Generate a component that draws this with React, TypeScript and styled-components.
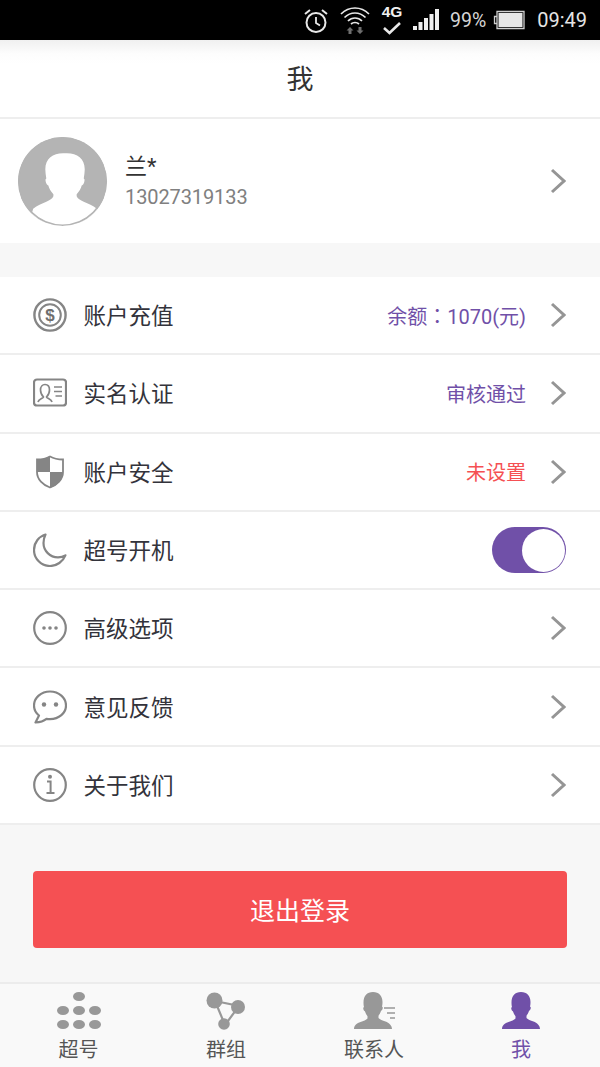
import styled, { createGlobalStyle } from 'styled-components';
import type { ReactNode } from 'react';

const GlobalStyle = createGlobalStyle`
  html, body {
    margin: 0;
    padding: 0;
    background: #f7f7f7;
  }
  * {
    box-sizing: border-box;
  }
`;

const Colon = styled.span`
  font-family: "Noto Sans CJK TC", sans-serif;
`;

const personPath =
  'M19 0c-6 0-9.500 4-9.500 10.500 0 2 .2 3.500.5 4.500-.8.300-.9 1.200-.6 2.300.3 1 .8 1.700 1.500 1.900.6 2 1.500 3.700 2.600 5v2.300c-1.300 1.500-4 2.500-7 3.500C3 30.800 0 33.500 0 37h38c0-3.500-3-6.200-6.500-7.500-3-1-5.700-2-7-3.500v-2.300c1.100-1.300 2-3 2.600-5 .7-.2 1.200-.9 1.500-1.900.3-1.100.2-2-.6-2.300.3-1 .5-2.500.5-4.500C28.500 4 25 0 19 0z';

const Chevron = () => (
  <ChevronSvg viewBox="0 0 16 26">
    <path d="M2 2l12 11L2 24" fill="none" stroke="#959595" strokeWidth="3" />
  </ChevronSvg>
);

const CoinIcon = () => (
  <RowSvg viewBox="0 0 34 34">
    <circle cx="17" cy="17" r="15.600" fill="none" stroke="#858585" strokeWidth="2.400" />
    <circle cx="17" cy="17" r="10.800" fill="none" stroke="#858585" strokeWidth="2" />
    <text x="17" y="23" textAnchor="middle" fontSize="17" fontWeight="700" fontFamily="Liberation Sans, sans-serif" fill="#6e6e6e">$</text>
  </RowSvg>
);

const IdIcon = () => (
  <RowSvg viewBox="0 0 34 34">
    <rect x="1" y="3.500" width="32" height="26" rx="3" fill="none" stroke="#858585" strokeWidth="2.200" />
    <path d="M5 26c.5-3 5-3.500 5.500-5-2-2-3-4-3-7 0-3.500 2-5.500 4.500-5.500s4.500 2 4.500 5.500c0 3-1 5-3 7 .5 1.500 5 2 5.500 5" fill="none" stroke="#858585" strokeWidth="1.700" />
    <path d="M21 11h8M21 15.500h8M22.500 20h6.500" stroke="#858585" strokeWidth="1.700" />
  </RowSvg>
);

const ShieldIcon = () => (
  <RowSvg viewBox="0 0 34 34">
    <path d="M17 1.500c4 2.300 8 3 13 3V17c0 7.500-6 13-13 15.500C10 30 4 24.500 4 17V4.500c5 0 9-.7 13-3z" fill="#fff" stroke="#858585" strokeWidth="1.800" />
    <path d="M17 1v16H4V4.500C9 4.500 13 3.500 17 1zM17 17h13c0 8-6 13.500-13 16V17z" fill="#858585" />
  </RowSvg>
);

const MoonIcon = () => (
  <RowSvg viewBox="0 0 34 34">
    <path d="M12.500 1.500C5.800 3.600 1 9.600 1 17c0 8.800 7.200 16 16 16 6.900 0 12.900-4.400 15.400-10.700-2 1.300-4.800 2-7.400 2-8 0-14.500-6.400-14.500-14.300 0-3.200.7-5.900 2-8.500z" fill="none" stroke="#858585" strokeWidth="2.200" strokeLinejoin="round" />
  </RowSvg>
);

const MoreIcon = () => (
  <RowSvg viewBox="0 0 34 34">
    <circle cx="17" cy="17" r="15.800" fill="none" stroke="#858585" strokeWidth="2.200" />
    <circle cx="11" cy="17" r="1.800" fill="#858585" />
    <circle cx="17" cy="17" r="1.800" fill="#858585" />
    <circle cx="23" cy="17" r="1.800" fill="#858585" />
  </RowSvg>
);

const ChatIcon = () => (
  <RowSvg viewBox="0 0 34 34">
    <path d="M17 1.500C8 1.500 1 7.800 1 15.500c0 4 1.900 7.500 5 10L2.500 32.500c4.500-.3 8.500-1.700 11-3.700 1.100.2 2.300.3 3.500.3 9 0 16-6 16-13.600S26 1.500 17 1.500z" fill="none" stroke="#858585" strokeWidth="2.200" strokeLinejoin="round" />
    <circle cx="11" cy="14.500" r="2.200" fill="#858585" />
    <circle cx="23" cy="14.500" r="2.200" fill="#858585" />
  </RowSvg>
);

const InfoIcon = () => (
  <RowSvg viewBox="0 0 34 34">
    <circle cx="17" cy="17" r="15.800" fill="none" stroke="#858585" strokeWidth="2.200" />
    <circle cx="17" cy="8.800" r="2" fill="#858585" />
    <path d="M14 13.500h3.600v11.500M13.500 25h8" fill="none" stroke="#858585" strokeWidth="2" />
  </RowSvg>
);

const DotsIcon = ({ color }: { color: string }) => (
  <TabSvg viewBox="0 0 44 38" $w={44} $h={38}>
    <g fill={color}>
      <ellipse cx="22" cy="4.500" rx="6" ry="4.500" />
      <ellipse cx="6" cy="18.500" rx="6" ry="4.500" />
      <ellipse cx="22" cy="18.500" rx="6" ry="4.500" />
      <ellipse cx="38" cy="18.500" rx="6" ry="4.500" />
      <ellipse cx="6" cy="32.500" rx="6" ry="4.500" />
      <ellipse cx="22" cy="32.500" rx="6" ry="4.500" />
      <ellipse cx="38" cy="32.500" rx="6" ry="4.500" />
    </g>
  </TabSvg>
);

const GroupIcon = ({ color }: { color: string }) => (
  <TabSvg viewBox="0 0 40 38" $w={40} $h={38}>
    <path d="M9 9l24 5-14 19z" fill="none" stroke={color} strokeWidth="2.200" />
    <circle cx="8.500" cy="8.500" r="8" fill={color} />
    <circle cx="32" cy="15" r="7" fill={color} />
    <circle cx="18" cy="32" r="5.800" fill={color} />
  </TabSvg>
);

const ContactIcon = ({ color }: { color: string }) => (
  <TabSvg viewBox="0 0 41 38" $w={41} $h={38}>
    <path d={personPath} fill={color} />
    <path d="M30 16h11M33 21h8M36 26h5" stroke={color} strokeWidth="1.400" />
  </TabSvg>
);

const PersonIcon = ({ color }: { color: string }) => (
  <TabSvg viewBox="0 0 38 38" $w={38} $h={38}>
    <path d={personPath} fill={color} />
  </TabSvg>
);

interface MenuItem {
  icon: ReactNode;
  label: string;
  value?: ReactNode;
  valueColor?: string;
  toggle?: boolean;
}

const PURPLE = '#7050a8';

const items: MenuItem[] = [
  {
    icon: <CoinIcon />,
    label: '账户充值',
    value: (
      <>
        余额<Colon>：</Colon>1070(元)
      </>
    ),
    valueColor: PURPLE,
  },
  { icon: <IdIcon />, label: '实名认证', value: '审核通过', valueColor: PURPLE },
  { icon: <ShieldIcon />, label: '账户安全', value: '未设置', valueColor: '#f55053' },
  { icon: <MoonIcon />, label: '超号开机', toggle: true },
  { icon: <MoreIcon />, label: '高级选项' },
  { icon: <ChatIcon />, label: '意见反馈' },
  { icon: <InfoIcon />, label: '关于我们' },
];

const tabs = [
  { label: '超号', Icon: DotsIcon },
  { label: '群组', Icon: GroupIcon },
  { label: '联系人', Icon: ContactIcon },
  { label: '我', Icon: PersonIcon, active: true },
];

export default function App() {
  return (
    <Page>
      <GlobalStyle />
      <StatusBar>
        <AlarmSvg viewBox="0 0 26 26" $w={26} $h={26}>
          <circle cx="13" cy="14.500" r="9.500" fill="none" stroke="#e8e8e8" strokeWidth="2" />
          <path d="M13 9v6l4 2.500" fill="none" stroke="#e8e8e8" strokeWidth="1.800" />
          <path d="M2 6l5-4M24 6l-5-4" stroke="#e8e8e8" strokeWidth="2" />
        </AlarmSvg>
        <StatusSvg viewBox="0 0 30 30" $w={30} $h={30}>
          <g fill="none" stroke="#e8e8e8" strokeWidth="1.700">
            <path d="M1 9c8-8 20-8 28 0" />
            <path d="M4.500 12.500c6-6 15-6 21 0" />
            <path d="M8 16c4-4 10-4 14 0" />
            <path d="M11 19c2.200-2 5.800-2 8 0" />
          </g>
          <path d="M10 22l-3.500 3.500h2V29h3v-3.500h2zM20 29l3.500-3.500h-2V22h-3v3.500h-2z" fill="#6e6e6e" />
        </StatusSvg>
        <FourG>
          <FourGText>4G</FourGText>
          <StatusSvg viewBox="0 0 20 14" $w={20} $h={14}>
            <path d="M2 7l5.500 5L18 2" fill="none" stroke="#e8e8e8" strokeWidth="2.600" />
          </StatusSvg>
        </FourG>
        <StatusSvg viewBox="0 0 26 22" $w={26} $h={22}>
          <path d="M0 17h4v4H0zM5.500 13h4v8h-4zM11 9h4v12h-4zM16.500 5h4v16h-4zM22 0h4v21h-4z" fill="#f0f0f0" />
        </StatusSvg>
        <StatusText>99%</StatusText>
        <StatusSvg viewBox="0 0 32 20" $w={32} $h={20}>
          <path d="M4 1.500h27v17H4zM4 6.500H1.500v7H4" fill="none" stroke="#cfcfcf" strokeWidth="1.300" />
          <rect x="5.500" y="3" width="24" height="14" fill="#e6e6e6" />
        </StatusSvg>
        <Clock>09:49</Clock>
      </StatusBar>

      <Header>我</Header>

      <Profile>
        <Avatar>
          <AvatarSvg viewBox="0 0 88 88">
            <path d="M44.500 16c-10 0-17.500 5-17.500 16 0 3 .5 6 1 9-.9.300-1 1.500-.5 3.500.5 1.700 1.300 3 2.500 3.500 .8 3 2.400 6 5 8.500v2c-1 2.500-3.500 3.800-7 5.500-4.500 2-9 3.500-13 7L10 88h69l-1-17c-4-3.500-8.500-5-13-7-3.500-1.700-6-3-7-5.500v-2c2.600-2.500 4.200-5.500 5-8.500 1.200-.5 2-1.800 2.500-3.500.5-2 .4-3.200-.5-3.500.5-3 1-6 1-9 0-11-7.500-16-17.500-16z" fill="#fff" />
            <circle cx="44" cy="44" r="43.200" fill="none" stroke="#b4b4b4" strokeWidth="1.600" />
          </AvatarSvg>
        </Avatar>
        <ProfileInfo>
          <ProfileName>兰*</ProfileName>
          <ProfilePhone>13027319133</ProfilePhone>
        </ProfileInfo>
        <Chevron />
      </Profile>

      <Menu>
        {items.map((item) => (
          <Row key={item.label}>
            <IconBox>{item.icon}</IconBox>
            <RowLabel>{item.label}</RowLabel>
            {item.value && <RowValue $color={item.valueColor}>{item.value}</RowValue>}
            {item.toggle ? (
              <Toggle>
                <ToggleKnob />
              </Toggle>
            ) : (
              <Chevron />
            )}
          </Row>
        ))}
      </Menu>

      <LogoutWrap>
        <LogoutButton>退出登录</LogoutButton>
      </LogoutWrap>

      <TabBar>
        {tabs.map(({ label, Icon, active }) => (
          <Tab key={label}>
            <TabIcon>
              <Icon color={active ? PURPLE : '#989898'} />
            </TabIcon>
            <TabLabel $active={active}>{label}</TabLabel>
          </Tab>
        ))}
      </TabBar>
    </Page>
  );
}

const FONT = `Roboto, "Noto Sans CJK SC", sans-serif`;

const Page = styled.div`
  width: 600px;
  height: 1067px;
  overflow: hidden;
  display: flex;
  flex-direction: column;
  background: #f7f7f7;
  font-family: ${FONT};
`;

const StatusBar = styled.div`
  height: 40px;
  flex: none;
  background: #000;
  display: flex;
  align-items: center;
  justify-content: flex-end;
  padding-right: 13px;
  color: #e8e8e8;
`;

const StatusSvg = styled.svg<{ $w: number; $h: number }>`
  width: ${(p) => p.$w}px;
  height: ${(p) => p.$h}px;
  display: block;
  flex: none;
  margin-right: 11px;
`;

const AlarmSvg = styled(StatusSvg)`
  margin-top: 1px;
`;

const FourG = styled.div`
  display: flex;
  flex-direction: column;
  align-items: center;
  height: 36px;
  width: 24px;
  margin: 0 9px 0 -1px;

  svg {
    margin: -1px 0 0;
  }
`;

const FourGText = styled.div`
  font-family: "Liberation Sans", sans-serif;
  font-size: 15.500px;
  line-height: 20px;
  font-weight: 700;
  color: #f0f0f0;
`;

const StatusText = styled.span`
  font-size: 19.500px;
  color: #d6d6d6;
  margin-right: 7px;
`;

const Clock = styled.span`
  font-size: 20px;
  color: #e4e4e4;
  margin-left: 1px;
`;

const Header = styled.div`
  height: 79px;
  flex: none;
  background: linear-gradient(#f0f0f0 0, #fdfdfd 14px, #fff 24px);
  border-bottom: 2px solid #eeeeee;
  display: flex;
  align-items: center;
  justify-content: center;
  padding-bottom: 2px;
  font-size: 27px;
  color: #333;
`;

const Profile = styled.div`
  height: 124px;
  flex: none;
  background: #fff;
  display: flex;
  align-items: center;
  padding: 0 34px 0 18px;
`;

const Avatar = styled.div`
  width: 89px;
  height: 89px;
  border-radius: 50%;
  background: #b4b4b4;
  flex: none;
  overflow: hidden;
`;

const AvatarSvg = styled.svg`
  display: block;
  width: 100%;
  height: 100%;
`;

const ProfileInfo = styled.div`
  flex: 1;
  margin-left: 18px;
  display: flex;
  flex-direction: column;
`;

const ProfileName = styled.div`
  font-size: 22px;
  line-height: 32px;
  color: #333;
`;

const ProfilePhone = styled.div`
  font-size: 20px;
  line-height: 28px;
  letter-spacing: -0.1px;
  color: #808080;
`;

const ChevronSvg = styled.svg`
  width: 16px;
  height: 26px;
  display: block;
  flex: none;
`;

const Menu = styled.div`
  margin-top: 34px;
  flex: none;
  background: #fff;
`;

const Row = styled.div`
  height: 78.3px;
  display: flex;
  align-items: center;
  padding: 0 34px 0 33px;
  border-bottom: 2px solid #eeeeee;
`;

const IconBox = styled.div`
  width: 34px;
  height: 34px;
  flex: none;
`;

const RowSvg = styled.svg`
  width: 34px;
  height: 34px;
  display: block;
`;

const RowLabel = styled.div`
  flex: 1;
  margin: -2px 0 0 16.500px;
  font-size: 22.500px;
  color: #33333b;
`;

const RowValue = styled.div<{ $color?: string }>`
  font-size: 20px;
  color: ${(p) => p.$color};
  margin-right: 24px;
`;

const Toggle = styled.div`
  width: 74px;
  height: 46px;
  border-radius: 23px;
  background: #7050a8;
  flex: none;
  display: flex;
  justify-content: flex-end;
  padding: 1.500px;
`;

const ToggleKnob = styled.div`
  width: 43px;
  height: 43px;
  border-radius: 50%;
  background: #fff;
`;

const LogoutWrap = styled.div`
  flex: 1;
  padding: 46px 33px 0;
`;

const LogoutButton = styled.div`
  height: 77px;
  border-radius: 4px;
  background: #f55053;
  color: #fff;
  font-size: 25px;
  padding-bottom: 2px;
  display: flex;
  align-items: center;
  justify-content: center;
`;

const TabBar = styled.div`
  height: 85px;
  flex: none;
  background: #f9f9f9;
  border-top: 2px solid #ececec;
  display: grid;
  grid-template-columns: 157px 138px 158px 136px;
`;

const Tab = styled.div`
  display: flex;
  flex-direction: column;
  align-items: center;
  padding-top: 8px;
`;

const TabIcon = styled.div`
  height: 38px;
  display: flex;
  align-items: center;
  justify-content: center;
`;

const TabSvg = styled.svg<{ $w: number; $h: number }>`
  width: ${(p) => p.$w}px;
  height: ${(p) => p.$h}px;
  display: block;
`;

const TabLabel = styled.div<{ $active?: boolean }>`
  margin-top: 7px;
  font-size: 20px;
  line-height: 26px;
  color: ${(p) => (p.$active ? '#7050a8' : '#555')};
`;
